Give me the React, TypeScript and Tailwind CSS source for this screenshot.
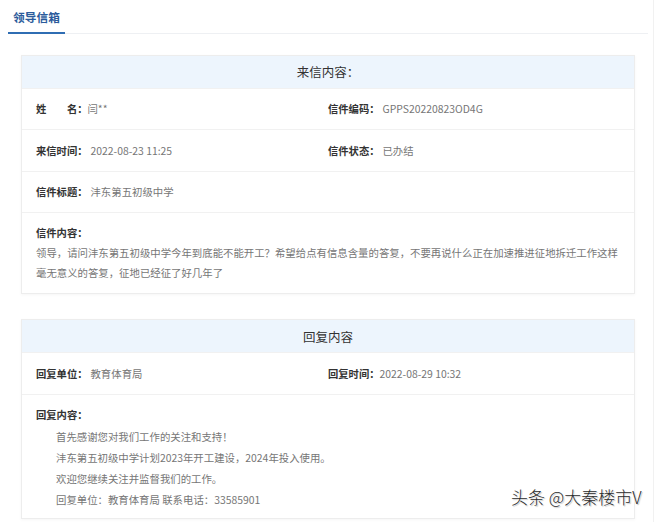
import React from "react";

const font = { fontFamily: '"Noto Sans CJK SC", "Noto Sans", sans-serif' };

function Label({ children }: { children: React.ReactNode }) {
  return <span className="font-bold text-[#333]">{children}</span>;
}

function Val({ children, gap = true }: { children: React.ReactNode; gap?: boolean }) {
  return <span className={`text-[#767676] text-[10.4px] ${gap ? "ml-[3px]" : ""}`}>{children}</span>;
}

export default function App() {
  return (
    <div className="w-[660px] h-[522px] bg-white relative overflow-hidden" style={font}>
      <div className="w-[654px] h-full border-r border-[#f1f1f1] pl-[8px]">
        {/* Tab bar */}
        <div className="w-[640px] h-[34px] flex items-end border-b border-[#eef0f3]">
          <div className="w-[57px] h-[34px] flex items-center justify-center border-b-2 border-[#2f6db3] -mb-px">
            <span className="text-[11.7px] font-bold text-[#2b5b9b] leading-none mt-[1px]">领导信箱</span>
          </div>
        </div>

        {/* Card 1 */}
        <div className="ml-[13px] mt-[21px] w-[614px] border border-[#ededed] shadow-[0_1px_3px_rgba(0,0,0,0.04)] text-[10.3px]">
          <div className="h-[32px] bg-[#edf5fd] flex items-center justify-center text-[12.5px] text-[#333]">
            来信内容：
          </div>
          <div className="h-[41px] px-[14px] grid grid-cols-2 items-center border-t border-[#f1f1f1]">
            <div>
              <Label>姓　　名：</Label>
              <Val gap={false}>闫**</Val>
            </div>
            <div>
              <Label>信件编码：</Label>
              <Val>GPPS20220823OD4G</Val>
            </div>
          </div>
          <div className="h-[42px] px-[14px] grid grid-cols-2 items-center border-t border-[#f1f1f1]">
            <div>
              <Label>来信时间：</Label>
              <Val>2022-08-23 11:25</Val>
            </div>
            <div>
              <Label>信件状态：</Label>
              <Val>已办结</Val>
            </div>
          </div>
          <div className="h-[41px] px-[14px] flex items-center border-t border-[#f1f1f1]">
            <Label>信件标题：</Label>
            <Val>沣东第五初级中学</Val>
          </div>
          <div className="px-[14px] pt-[10px] pb-[10px] border-t border-[#f1f1f1] leading-[20px]">
            <div>
              <Label>信件内容：</Label>
            </div>
            <div className="text-[#767676] text-[10.4px] whitespace-nowrap">
              <div>领导，请问沣东第五初级中学今年到底能不能开工？希望给点有信息含量的答复，不要再说什么正在加速推进征地拆迁工作这样</div>
              <div>毫无意义的答复，征地已经征了好几年了</div>
            </div>
          </div>
        </div>

        {/* Card 2 */}
        <div className="ml-[13px] mt-[25px] w-[614px] border border-[#ededed] shadow-[0_1px_3px_rgba(0,0,0,0.04)] text-[10.3px]">
          <div className="h-[32px] pt-[2px] bg-[#edf5fd] flex items-center justify-center text-[12.5px] text-[#333]">
            回复内容
          </div>
          <div className="h-[42px] px-[14px] grid grid-cols-2 items-center border-t border-[#f1f1f1]">
            <div>
              <Label>回复单位：</Label>
              <Val>教育体育局</Val>
            </div>
            <div>
              <Label>回复时间：</Label>
              <Val gap={false}>2022-08-29 10:32</Val>
            </div>
          </div>
          <div className="px-[14px] pt-[10px] pb-[8px] border-t border-[#f1f1f1] leading-[21px]">
            <div className="leading-[20px]">
              <Label>回复内容：</Label>
            </div>
            <div className="pl-[20px] pt-[1px] text-[#767676] text-[10.4px] whitespace-nowrap">
              <div>首先感谢您对我们工作的关注和支持！</div>
              <div>沣东第五初级中学计划2023年开工建设，2024年投入使用。</div>
              <div>欢迎您继续关注并监督我们的工作。</div>
              <div>回复单位：教育体育局 联系电话：33585901</div>
            </div>
          </div>
        </div>
      </div>

      {/* Watermark */}
      <div
        className="absolute left-[511px] top-[485px] text-[17px] font-light text-[#2a2a2a] whitespace-nowrap leading-[24px]"
        style={{ textShadow: "0 0 2px #fff, 0 0 2px #fff, 1px 1px 1px rgba(0,0,0,0.3)" }}
      >
        头条 @大秦楼市V
      </div>
    </div>
  );
}
